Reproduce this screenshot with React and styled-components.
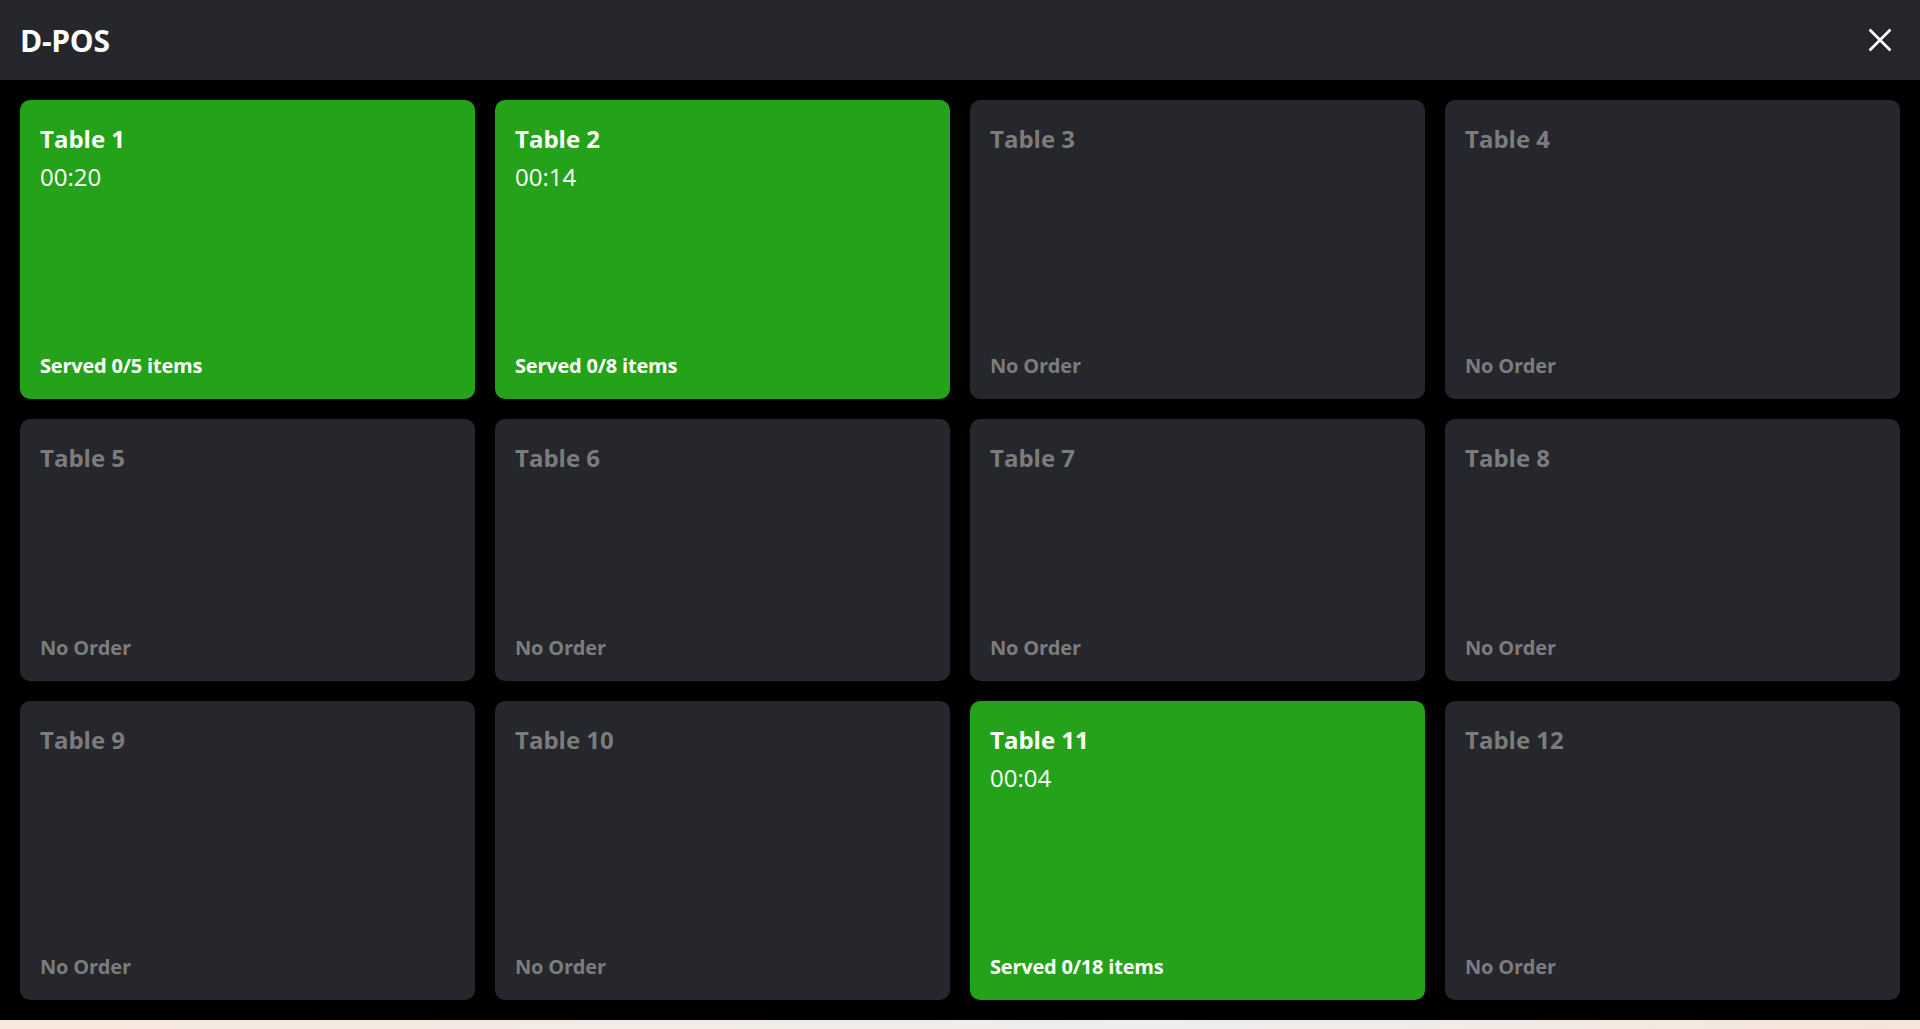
import React from 'react';
import styled, { createGlobalStyle } from 'styled-components';

const tables = [
  { id: 1, time: '00:20', served: 0, total: 5 },
  { id: 2, time: '00:14', served: 0, total: 8 },
  { id: 3 },
  { id: 4 },
  { id: 5 },
  { id: 6 },
  { id: 7 },
  { id: 8 },
  { id: 9 },
  { id: 10 },
  { id: 11, time: '00:04', served: 0, total: 18 },
  { id: 12 }
];

const GlobalStyle = createGlobalStyle`
  html, body {
    margin: 0;
    padding: 0;
    height: 100%;
  }
  body {
    font-family: "Open Sans", "Noto Sans", sans-serif;
    background: linear-gradient(90deg, #f7e7dc 0%, #f1ece8 45%, #eeeeee 60%, #f6e5d8 100%);
    overflow: hidden;
  }
  * {
    box-sizing: border-box;
  }
`;

const App = () => {
  return (
    <>
      <GlobalStyle />
      <Screen>
        <Header>
          <Brand>D-POS</Brand>
          <CloseButton aria-label="Close">
            <svg width="24" height="24" viewBox="0 0 24 24">
              <path d="M1.5 1.5 L22.5 22.5 M22.5 1.5 L1.5 22.5" stroke="#ffffff" strokeWidth="2.6" strokeLinecap="butt" fill="none" />
            </svg>
          </CloseButton>
        </Header>

        <TableGrid>
          {tables.map(table => {
            const active = !!table.time;
            return (
              <TableCard key={table.id} active={active}>
                <TableName active={active}>Table {table.id}</TableName>
                {active && <Timer>{table.time}</Timer>}
                <Status active={active}>
                  {active ? `Served ${table.served}/${table.total} items` : 'No Order'}
                </Status>
              </TableCard>
            );
          })}
        </TableGrid>
      </Screen>
    </>
  );
};

const Screen = styled.div`
  height: 1020px;
  display: flex;
  flex-direction: column;
  background-color: #000000;
`;

const Header = styled.header`
  height: 80px;
  flex-shrink: 0;
  display: flex;
  align-items: center;
  justify-content: space-between;
  padding: 0 20px;
  background-color: #26272c;
`;

const Brand = styled.h1`
  margin: 0;
  font-size: 30px;
  font-weight: 700;
  color: #ffffff;
  letter-spacing: -0.3px;
`;

const CloseButton = styled.button`
  width: 40px;
  height: 40px;
  display: flex;
  align-items: center;
  justify-content: center;
  padding: 0;
  border: none;
  background: transparent;
  cursor: pointer;
`;

const TableGrid = styled.div`
  flex: 1;
  display: grid;
  grid-template-columns: repeat(4, 1fr);
  align-content: stretch;
  gap: 20px;
  padding: 20px;
`;

const TableCard = styled.div`
  display: flex;
  flex-direction: column;
  padding: 20px;
  border-radius: 10px;
  background-color: ${props => props.active ? '#24a31a' : '#26272c'};
  cursor: pointer;
`;

const TableName = styled.div`
  font-size: 24px;
  font-weight: 700;
  line-height: 38.4px;
  color: ${props => props.active ? '#ffffff' : '#7c7c7c'};
`;

const Timer = styled.div`
  font-size: 24px;
  font-weight: 400;
  line-height: 37px;
  color: #ffffff;
`;

const Status = styled.div`
  margin-top: auto;
  font-size: 20px;
  font-weight: 700;
  color: ${props => props.active ? '#ffffff' : '#7c7c7c'};
  letter-spacing: -0.2px;
`;

export default App;
